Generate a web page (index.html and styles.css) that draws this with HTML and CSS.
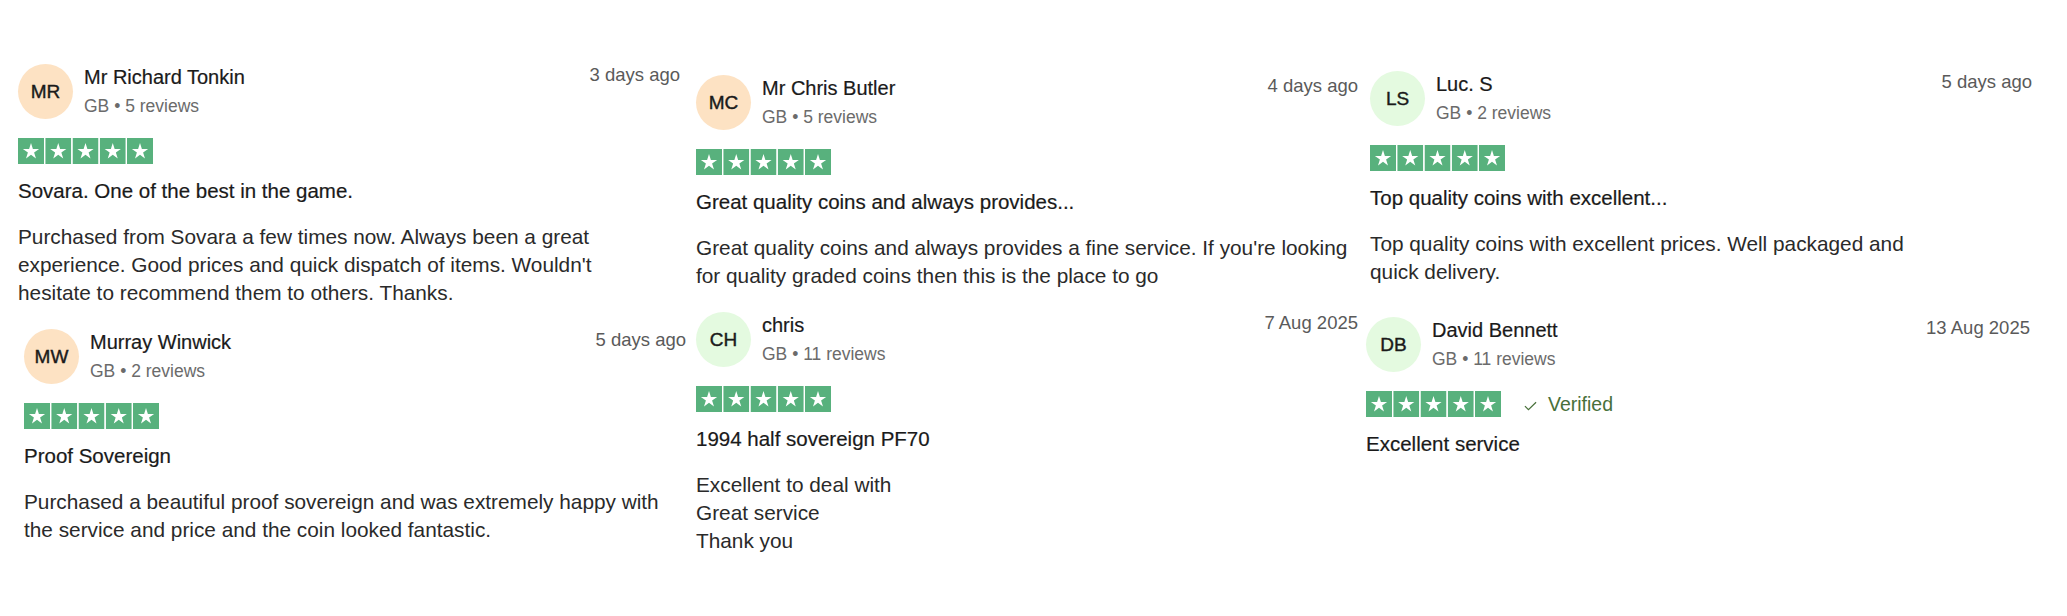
FILE: index.html
```html
<!DOCTYPE html>
<html lang="en">
<head>
    <meta charset="UTF-8">
    <meta name="viewport" content="width=device-width, initial-scale=1.0">
    <title>Customer reviews</title>
    <link rel="stylesheet" href="styles.css">
</head>
<body>
    <!-- shared star row -->
    <svg class="defs" width="0" height="0" aria-hidden="true">
        <symbol id="star" viewBox="0 0 26 26">
            <rect width="26" height="26" fill="#58b17d"/>
            <polygon fill="#fff" points="13,5 14.9,10.9 21.1,10.9 16.1,14.5 18,20.4 13,16.8 8,20.4 9.9,14.5 4.9,10.9 11.1,10.9"/>
        </symbol>
        <symbol id="stars5" viewBox="0 0 135 26">
            <use href="#star" x="0" width="26" height="26"/>
            <use href="#star" x="27.25" width="26" height="26"/>
            <use href="#star" x="54.5" width="26" height="26"/>
            <use href="#star" x="81.75" width="26" height="26"/>
            <use href="#star" x="109" width="26" height="26"/>
        </symbol>
    </svg>

    <div class="wall">
        <div class="col col-1">
            <article class="review">
                <header class="review-head">
                    <span class="avatar peach">MR</span>
                    <div class="who">
                        <div class="name">Mr Richard Tonkin</div>
                        <div class="meta">GB • 5 reviews</div>
                    </div>
                    <span class="date">3 days ago</span>
                </header>
                <div class="rating"><svg class="stars"><use href="#stars5"/></svg></div>
                <h3 class="title">Sovara. One of the best in the game.</h3>
                <p class="text">Purchased from Sovara a few times now. Always been a great<br>experience. Good prices and quick dispatch of items. Wouldn't<br>hesitate to recommend them to others. Thanks.</p>
            </article>
            <article class="review nudge-right">
                <header class="review-head">
                    <span class="avatar peach">MW</span>
                    <div class="who">
                        <div class="name">Murray Winwick</div>
                        <div class="meta">GB • 2 reviews</div>
                    </div>
                    <span class="date">5 days ago</span>
                </header>
                <div class="rating"><svg class="stars"><use href="#stars5"/></svg></div>
                <h3 class="title">Proof Sovereign</h3>
                <p class="text">Purchased a beautiful proof sovereign and was extremely happy with<br>the service and price and the coin looked fantastic.</p>
            </article>
        </div>

        <div class="col col-2">
            <article class="review">
                <header class="review-head">
                    <span class="avatar peach">MC</span>
                    <div class="who">
                        <div class="name">Mr Chris Butler</div>
                        <div class="meta">GB • 5 reviews</div>
                    </div>
                    <span class="date">4 days ago</span>
                </header>
                <div class="rating"><svg class="stars"><use href="#stars5"/></svg></div>
                <h3 class="title">Great quality coins and always provides...</h3>
                <p class="text">Great quality coins and always provides a fine service. If you're looking<br>for quality graded coins then this is the place to go</p>
            </article>
            <article class="review">
                <header class="review-head">
                    <span class="avatar mint">CH</span>
                    <div class="who">
                        <div class="name">chris</div>
                        <div class="meta">GB • 11 reviews</div>
                    </div>
                    <span class="date">7 Aug 2025</span>
                </header>
                <div class="rating"><svg class="stars"><use href="#stars5"/></svg></div>
                <h3 class="title">1994 half sovereign PF70</h3>
                <p class="text">Excellent to deal with<br>Great service<br>Thank you</p>
            </article>
        </div>

        <div class="col col-3">
            <article class="review">
                <header class="review-head">
                    <span class="avatar mint">LS</span>
                    <div class="who">
                        <div class="name">Luc. S</div>
                        <div class="meta">GB • 2 reviews</div>
                    </div>
                    <span class="date">5 days ago</span>
                </header>
                <div class="rating"><svg class="stars"><use href="#stars5"/></svg></div>
                <h3 class="title">Top quality coins with excellent...</h3>
                <p class="text">Top quality coins with excellent prices. Well packaged and<br>quick delivery.</p>
            </article>
            <article class="review nudge-left">
                <header class="review-head">
                    <span class="avatar mint">DB</span>
                    <div class="who">
                        <div class="name">David Bennett</div>
                        <div class="meta">GB • 11 reviews</div>
                    </div>
                    <span class="date">13 Aug 2025</span>
                </header>
                <div class="rating">
                    <svg class="stars"><use href="#stars5"/></svg>
                    <span class="verified">
                        <svg class="tick" viewBox="0 0 14 10"><path d="M1 5.2 L4.8 9 L13 1" fill="none" stroke="currentColor" stroke-width="1.3"/></svg>
                        Verified
                    </span>
                </div>
                <h3 class="title">Excellent service</h3>
            </article>
        </div>
    </div>
</body>
</html>
```

FILE: styles.css
```css
/* review wall */
body {
    margin: 0;
    background-color: #fff;
    color: #1c1c1c;
    font-family: "Liberation Sans", Arial, sans-serif;
}

.defs {
    position: absolute;
}

.wall {
    display: grid;
    grid-template-columns: repeat(3, 662px);
    column-gap: 14px;
    padding-left: 18px;
}

.col {
    display: flex;
    flex-direction: column;
    gap: 22px;
}

.col-1 {
    padding-top: 64px;
}

.col-2 {
    padding-top: 75px;
    margin-left: 2px;
    margin-right: -2px;
}

.col-3 {
    padding-top: 71px;
}

.nudge-right {
    margin-left: 6px;
    margin-right: -6px;
}

.nudge-left {
    margin-top: 9px;
    margin-left: -4px;
    margin-right: 2px;
}

.review-head {
    display: flex;
    align-items: flex-start;
    height: 55px;
}

.avatar {
    width: 55px;
    height: 55px;
    border-radius: 50%;
    flex-shrink: 0;
    display: flex;
    align-items: center;
    justify-content: center;
    font-size: 19px;
    color: #1a1a1a;
    -webkit-text-stroke: 0.4px;
}

.avatar.peach {
    background-color: #fde2c3;
}

.avatar.mint {
    background-color: #e4fae0;
}

.who {
    margin-left: 11px;
}

.name {
    font-size: 20px;
    line-height: 26px;
    color: #1a1a1a;
    -webkit-text-stroke: 0.2px;
}

.meta {
    margin-top: 4px;
    font-size: 17.5px;
    line-height: 24px;
    color: #6b6b6b;
}

.date {
    margin-left: auto;
    font-size: 18.5px;
    line-height: 22px;
    color: #5a5a5a;
}

.rating {
    margin-top: 19px;
    height: 26px;
    display: flex;
    align-items: center;
}

.stars {
    display: block;
    width: 135px;
    height: 26px;
}

.verified {
    margin-left: 23px;
    display: flex;
    align-items: center;
    gap: 11px;
    font-size: 19.5px;
    color: #48703a;
}

.tick {
    width: 13px;
    height: 10px;
    margin-top: 3px;
}

.title {
    margin: 13px 0 0;
    font-size: 20.5px;
    line-height: 28px;
    font-weight: 400;
    color: #1a1a1a;
    -webkit-text-stroke: 0.2px;
}

.text {
    margin: 18px 0 0;
    font-size: 20.8px;
    line-height: 28px;
    color: #2a2a2a;
}
```
